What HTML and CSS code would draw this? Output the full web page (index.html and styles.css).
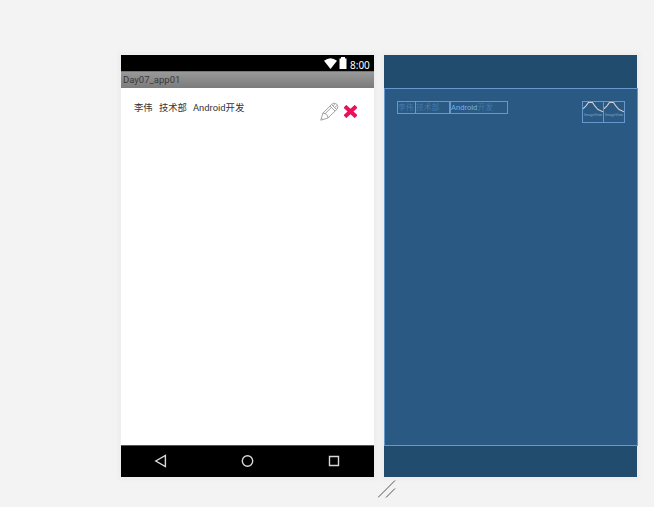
FILE: index.html
```html
<!DOCTYPE html>
<html lang="zh-CN">
<head>
<meta charset="utf-8">
<title>Day07_app01</title>
<link rel="stylesheet" href="styles.css">
</head>
<body>
<main class="surface">
  <section class="screen phone">
    <header class="status">
      <svg class="wifi" width="13" height="11" viewBox="0 0 13 11"><path d="M0 2.8Q6.5-2.4 13 2.8L6.5 11Z" fill="#fff"/></svg>
      <svg class="battery" width="8" height="12" viewBox="0 0 8 12"><path d="M.5 1.4H2V0H6V1.4H7.5V12H.5Z" fill="#fff"/></svg>
      <span class="clock">8:00</span>
    </header>
    <div class="titlebar">Day07_app01</div>
    <div class="content">
      <div class="row">
        <span class="name">李伟</span>
        <span class="dept">技术部</span>
        <span class="job">Android开发</span>
        <svg class="edit" width="19" height="19" viewBox="0 0 19 19" fill="none" stroke="#999" stroke-width="0.9" stroke-linejoin="round">
          <path d="M.8 18.2L2.8 11.3L11.8 2.2Q14-.1 16.8 2.2Q19 4.6 17 7.2L8 16Z"/>
          <path d="M2.8 11.3Q7.6 11.2 8 16M4.8 12L11.2 5.6M10 4L15 9M11.5 2.5L16.6 7.5M13 3.8L14.8 2.2M14.6 5.6L16.8 3.6M1.5 16.2L2.8 17.5"/>
        </svg>
        <svg class="delete" width="13" height="13" viewBox="0 0 13 13"><path d="M2.4 2.7L10.6 10.3M10.6 2.7L2.4 10.3" stroke="#ec1059" stroke-width="4" stroke-linecap="square" fill="none"/></svg>
      </div>
    </div>
    <footer class="nav">
      <svg width="14" height="14" viewBox="0 0 14 14"><path d="M11.4 1.4V12.6L1.8 7Z"/></svg>
      <svg width="14" height="14" viewBox="0 0 14 14"><circle cx="6.5" cy="7" r="5.2"/></svg>
      <svg width="14" height="14" viewBox="0 0 14 14"><path d="M2.5 2.5H11.5V11.5H2.5Z"/></svg>
    </footer>
  </section>
  <section class="screen blueprint">
    <div class="bounds">
      <div class="boxes">
        <span class="box b-name">李伟</span>
        <span class="box b-dept">技术部</span>
        <span class="box b-job"><b>Android</b>开发</span>
      </div>
      <div class="images">
        <div class="image"><svg width="20" height="11" viewBox="0 0 20 11"><path d="M0 6.8L3 3.8L5.5 .4H9.5L12 4.2L15 7.5L20 9.8"/></svg><span>ImageView</span></div>
        <div class="image"><svg width="20" height="11" viewBox="0 0 20 11"><path d="M0 6.8L3 3.8L5.5 .4H9.5L12 4.2L15 7.5L20 9.8"/></svg><span>ImageView</span></div>
      </div>
    </div>
  </section>
</main>
<svg class="grip" width="18" height="18" viewBox="0 0 18 18"><path d="M0 17.5L17 .5M8 17.5L17 8.5"/></svg>
</body>
</html>
```
FILE: styles.css
```css
* { box-sizing: border-box; }
body {
  margin: 0;
  width: 654px;
  height: 507px;
  overflow: hidden;
  background: #f3f3f3;
  font-family: "Noto Sans", "Noto Sans CJK SC", sans-serif;
}
.surface {
  display: flex;
  gap: 10px;
  padding: 55px 0 0 121px;
}
.screen {
  width: 253px;
  height: 422px;
  flex: none;
  display: flex;
  flex-direction: column;
  box-shadow: 0 0 4px 3px #ededed;
}
.phone { background: #fff; }
.status {
  height: 16px;
  background: #000;
  display: flex;
  align-items: flex-start;
  justify-content: flex-end;
  padding: 3px 3px 0 0;
}
.battery { margin: -1px 3px 0 2px; }
.clock {
  color: #fff;
  width: 21px;
  font-size: 10px;
  line-height: 15px;
  white-space: nowrap;
}
.titlebar {
  height: 17px;
  padding-left: 2px;
  background: linear-gradient(#999, #7b7b7b);
  border-top: 1px solid #777;
  color: #383838;
  font-family: Roboto, sans-serif;
  font-size: 9.5px;
  line-height: 15px;
}
.content { flex: 1; padding: 13px 17px 0 13px; }
.row {
  display: flex;
  font-size: 9.3px;
  line-height: 13px;
  color: #333;
  white-space: nowrap;
}
.name { width: 25px; }
.dept { width: 34px; }
.job {
  width: 111px;
  font-family: Roboto, "Noto Sans CJK SC", sans-serif;
  font-size: 9.4px;
}
.edit { margin: 1px 0 0 16px; flex: none; }
.delete { margin: 4px 0 0 5px; flex: none; }
.nav {
  height: 32px;
  background: #000;
  border-top: 1px solid #555;
  display: flex;
  justify-content: space-between;
  align-items: center;
  padding: 0 33px 1px;
}
.nav svg { fill: none; stroke: #d8d8d8; stroke-width: 1.4; }
.blueprint { background: #224c6d; padding-top: 33px; }
.bounds {
  width: 254px;
  height: 358px;
  background: #2a5983;
  border: 1px solid #6599cd;
  padding: 12px 12px 0 12px;
  display: flex;
  justify-content: space-between;
  align-items: flex-start;
}
.boxes { display: flex; }
.box {
  height: 13px;
  border: 1px solid #6599cd;
  color: #4779a8;
  font-size: 7.8px;
  line-height: 11px;
  white-space: nowrap;
}
.b-name { width: 18px; border-right: 0; }
.b-dept { width: 34px; border-right: 0; }
.b-job { width: 59px; border-left-width: 2px; }
.b-job b {
  font-family: Roboto, sans-serif;
  font-weight: 400;
  color: #79aee0;
  font-size: 7.6px;
}
.images { display: flex; }
.image {
  width: 22px;
  height: 22px;
  border: 1px solid #6599cd;
  display: flex;
  flex-direction: column;
  align-items: center;
  overflow: hidden;
}
.image + .image { margin-left: -1px; }
.image svg { flex: none; fill: none; stroke: #d2ccd2; stroke-width: 1.1; }
.image span { font-size: 3.5px; line-height: 4px; color: #86aacb; }
.grip {
  position: absolute;
  left: 378px;
  top: 480px;
  fill: none;
  stroke: #555;
  stroke-width: 1;
}
```
